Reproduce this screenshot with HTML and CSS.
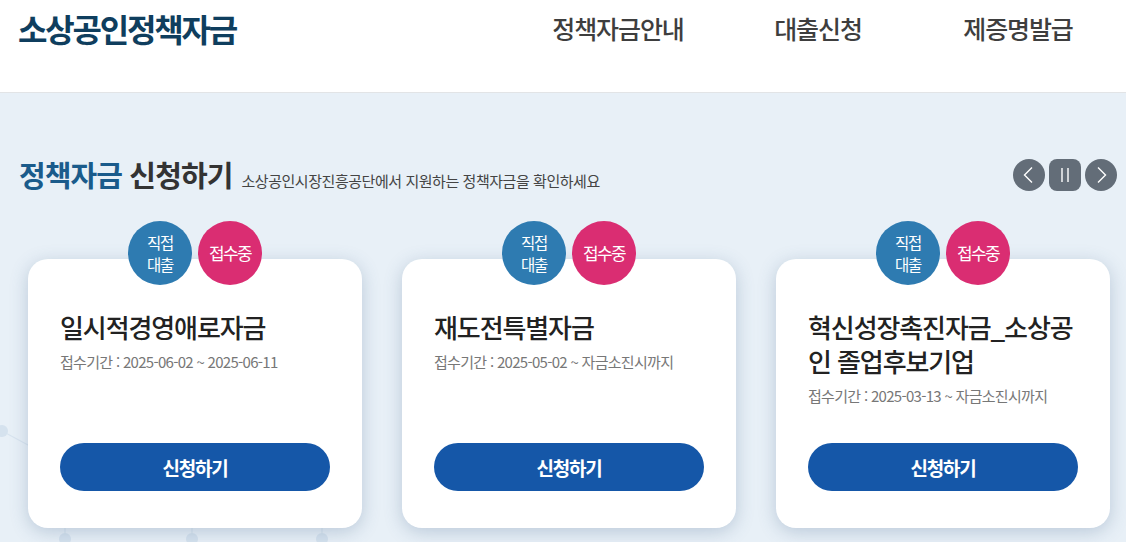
FILE: index.html
```html
<!DOCTYPE html>
<html lang="ko">
<head>
<meta charset="utf-8">
<title>소상공인정책자금</title>
<link rel="stylesheet" href="styles.css">
</head>
<body>
<header class="site-header">
  <div class="header-bar">
    <h1 class="logo">소상공인정책자금</h1>
    <nav class="gnb">
      <a class="gnb-item" href="#">정책자금안내</a>
      <a class="gnb-item" href="#">대출신청</a>
      <a class="gnb-item" href="#">제증명발급</a>
    </nav>
  </div>
</header>
<main class="main">
  <svg class="deco" width="1126" height="449" viewBox="0 0 1126 449" aria-hidden="true">
    <g fill="#d5e2ee" stroke="#d8e4ef" stroke-width="1.2">
      <line x1="2" y1="338" x2="28" y2="352"/>
      <line x1="-10" y1="330" x2="2" y2="338"/>
      <line x1="65" y1="445" x2="65" y2="430"/>
      <line x1="192" y1="445" x2="192" y2="430"/>
      <line x1="322" y1="445" x2="322" y2="430"/>
      <circle cx="2" cy="338" r="6" stroke="none"/>
      <circle cx="65" cy="446" r="6" stroke="none"/>
      <circle cx="192" cy="446" r="6" stroke="none"/>
      <circle cx="322" cy="446" r="6" stroke="none"/>
    </g>
  </svg>
  <div class="section-head">
    <div class="heading">
      <h2 class="section-title"><span class="accent">정책자금</span> 신청하기</h2>
      <p class="section-desc">소상공인시장진흥공단에서 지원하는 정책자금을 확인하세요</p>
    </div>
    <div class="controls">
      <button class="ctrl round" aria-label="이전">
        <svg width="32" height="32" viewBox="0 0 32 32"><path d="M19 8.5 L11.5 16 L19 23.5" fill="none" stroke="#fff" stroke-width="1.4"/></svg>
      </button>
      <button class="ctrl square" aria-label="정지">
        <svg width="32" height="32" viewBox="0 0 32 32"><path d="M13 9 V23 M19 9 V23" fill="none" stroke="#fff" stroke-width="1.4"/></svg>
      </button>
      <button class="ctrl round" aria-label="다음">
        <svg width="32" height="32" viewBox="0 0 32 32"><path d="M13 8.5 L20.5 16 L13 23.5" fill="none" stroke="#fff" stroke-width="1.4"/></svg>
      </button>
    </div>
  </div>

  <div class="cards">
    <div class="card-wrap">
      <div class="badges">
        <span class="badge blue">직접<br>대출</span>
        <span class="badge pink">접수중</span>
      </div>
      <div class="card">
        <h3 class="card-title">일시적경영애로자금</h3>
        <p class="card-date">접수기간 : 2025-06-02 ~ 2025-06-11</p>
        <a class="apply" href="#">신청하기</a>
      </div>
    </div>
    <div class="card-wrap">
      <div class="badges">
        <span class="badge blue">직접<br>대출</span>
        <span class="badge pink">접수중</span>
      </div>
      <div class="card">
        <h3 class="card-title">재도전특별자금</h3>
        <p class="card-date">접수기간 : 2025-05-02 ~ 자금소진시까지</p>
        <a class="apply" href="#">신청하기</a>
      </div>
    </div>
    <div class="card-wrap">
      <div class="badges">
        <span class="badge blue">직접<br>대출</span>
        <span class="badge pink">접수중</span>
      </div>
      <div class="card">
        <h3 class="card-title">혁신성장촉진자금_소상공인 졸업후보기업</h3>
        <p class="card-date">접수기간 : 2025-03-13 ~ 자금소진시까지</p>
        <a class="apply" href="#">신청하기</a>
      </div>
    </div>
  </div>
</main>
</body>
</html>
```
FILE: styles.css
```css
* { box-sizing: border-box; }
html, body {
  margin: 0;
  padding: 0;
}
body {
  width: 1126px;
  height: 542px;
  overflow: hidden;
  background: #e8f0f7;
  font-family: "Noto Sans CJK KR", "Noto Sans", sans-serif;
  color: #222;
}
.site-header {
  height: 93px;
  background: #fff;
  border-bottom: 1px solid #e2e4e6;
}
.header-bar {
  height: 56px;
  display: flex;
  align-items: center;
  padding: 0 8px 0 18px;
}
.logo {
  margin: 0;
  font-size: 32px;
  font-weight: 700;
  letter-spacing: -2.2px;
  color: #0f3e5e;
  line-height: 1;
}
.gnb {
  margin-left: auto;
  display: flex;
  width: 600px;
}
.gnb-item {
  flex: 1;
  text-align: center;
  text-decoration: none;
  color: #3e3e3e;
  font-size: 25px;
  font-weight: 500;
  letter-spacing: -1.1px;
  line-height: 1;
}
.main {
  position: relative;
  padding: 66px 9px 0 19px;
}
.deco {
  position: absolute;
  left: 0;
  top: 0;
  z-index: 0;
}
.section-head {
  position: relative;
  display: flex;
  align-items: center;
  justify-content: space-between;
  height: 32px;
}
.heading {
  display: flex;
  align-items: baseline;
  gap: 9px;
}
.section-title {
  margin: 0;
  font-size: 29px;
  font-weight: 700;
  letter-spacing: -0.9px;
  color: #333;
  line-height: 1;
}
.section-title .accent { color: #1a5b8b; }
.section-desc {
  margin: 0;
  font-size: 15px;
  letter-spacing: -0.45px;
  color: #444;
}
.controls {
  display: flex;
  gap: 4px;
}
.ctrl {
  width: 32px;
  height: 32px;
  padding: 0;
  border: 0;
  background: #636d78;
  display: block;
}
.ctrl svg { display: block; }
.ctrl.round { border-radius: 50%; }
.ctrl.square { border-radius: 8px; }

.cards {
  position: relative;
  display: flex;
  gap: 40px;
  margin-top: 30px;
  padding-left: 9px;
}
.card-wrap {
  width: 334px;
  display: flex;
  flex-direction: column;
}
.badges {
  position: relative;
  z-index: 2;
  display: flex;
  justify-content: center;
  gap: 6px;
  height: 64px;
}
.badge {
  width: 64px;
  height: 64px;
  border-radius: 50%;
  display: flex;
  align-items: center;
  justify-content: center;
  text-align: center;
  color: #fff;
  font-size: 15.5px;
  line-height: 22.5px;
  letter-spacing: -1.2px;
}
.badge.blue { background: #2e7bb1; }
.badge.pink { background: #da2d72; font-size: 17px; letter-spacing: -1.6px; }
.card {
  position: relative;
  z-index: 1;
  margin-top: -26px;
  height: 269px;
  background: #fff;
  border-radius: 20px;
  box-shadow: 0 4px 18px rgba(70, 100, 140, 0.28);
  padding: 51px 32px 37px;
  display: flex;
  flex-direction: column;
}
.card-title {
  margin: 0;
  font-size: 26px;
  font-weight: 500;
  line-height: 34px;
  letter-spacing: -1.1px;
  color: #222;
  word-break: break-all;
}
.card-date {
  margin: 8px 0 0;
  font-size: 15px;
  line-height: 20px;
  letter-spacing: -0.7px;
  color: #777;
}
.apply {
  margin-top: auto;
  height: 48px;
  border-radius: 24px;
  background: #1557a8;
  color: #fff;
  text-decoration: none;
  display: flex;
  align-items: center;
  justify-content: center;
  font-size: 19px;
  font-weight: 700;
  letter-spacing: -1.2px;
}
```
